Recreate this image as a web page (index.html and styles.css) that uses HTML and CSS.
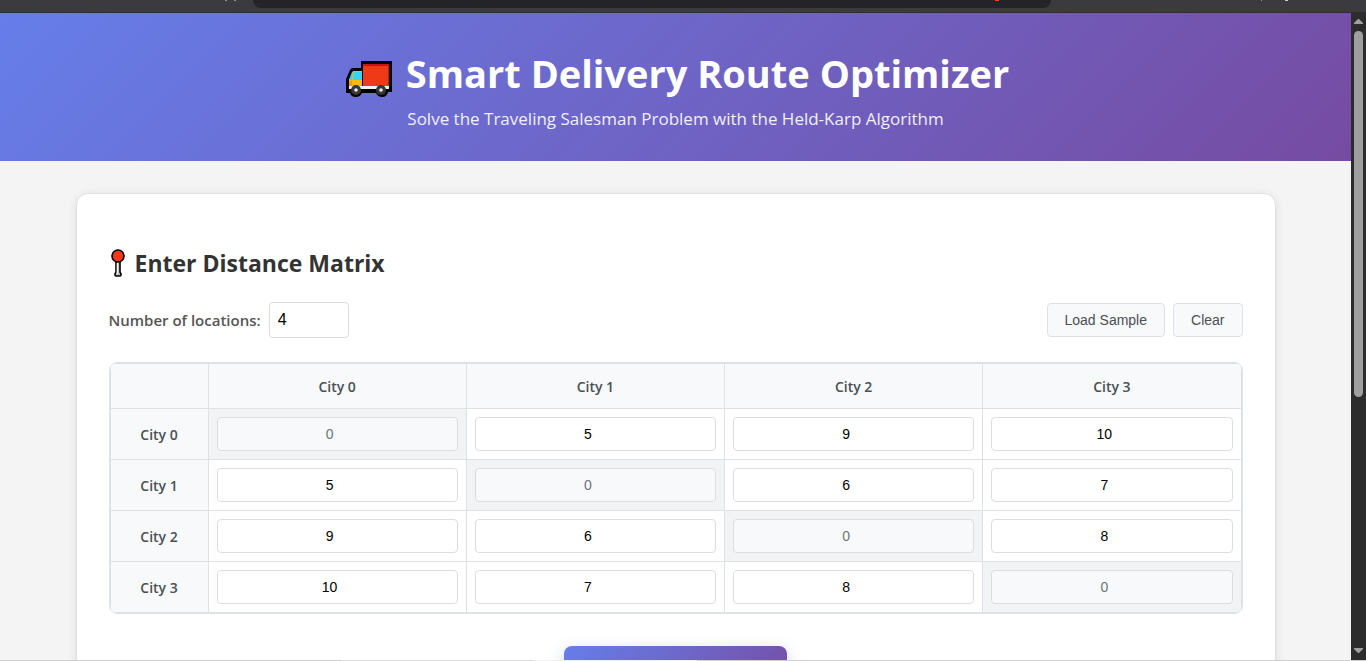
FILE: index.html
```html
<!DOCTYPE html>
<html lang="en">
<head>
<meta charset="utf-8">
<title>Smart Delivery Route Optimizer</title>
<link rel="stylesheet" href="styles.css">
</head>
<body>
<div class="toolbar">
  <svg class="marks" width="12" height="1" viewBox="0 0 12 1" aria-hidden="true"><path fill="#8c8c90" d="M1 0h2v1H1zM10 0h2v1h-2z"/></svg>
  <div class="address"><span class="shield"></span></div>
  <svg class="marks" width="28" height="1" viewBox="0 0 28 1" aria-hidden="true"><path fill="#8c8c90" d="M0 0h1v1H0z"/><path fill="#d0d0d2" d="M24 0h3v1h-3z"/></svg>
</div>
<div class="window">
  <div class="page">
    <header class="hero">
      <h1 class="hero-title">
        <svg class="truck" viewBox="0 0 46 36" aria-hidden="true">
          <path fill="#000" d="M15 0h31v31h-4q-1 5-6 5-4 0-6-4H16q-2 4-6 4-5 0-6-4H0V18L4 9q1-2 3-2h8z"/>
          <path fill="#f03a17" d="M17 3h26v22H17z"/>
          <path fill="#c81414" d="M17 3h26v2H17zM42 3h1v22h-1z"/>
          <path fill="#fdb813" d="M7 10h9v15H3v-6z"/>
          <path fill="#f59a00" d="M3 20h3v5H3z"/>
          <path fill="#32d4fa" d="M6 11h1l-1 8H3zM8 11h8v8H7z"/>
          <path fill="#f2f2f2" d="M3 25h40v3H3z"/>
          <circle cx="10" cy="29" r="5" fill="#383838"/><circle cx="35" cy="29" r="5" fill="#383838"/>
          <circle cx="10" cy="29" r="1.800" fill="#eee"/><circle cx="35" cy="29" r="1.800" fill="#eee"/>
        </svg>
        <span>Smart Delivery Route Optimizer</span>
      </h1>
      <p class="hero-sub">Solve the Traveling Salesman Problem with the Held-Karp Algorithm</p>
    </header>
    <main class="card">
      <h2 class="section-title">
        <svg class="pin" viewBox="0 0 14 28" aria-hidden="true">
          <path d="M5 12h4v11l1 2v1q0 1-1 1H5q-1 0-1-1v-1l1-2z" fill="#b8b8b8" stroke="#000" stroke-width="1.600"/>
          <path stroke="#f4f4f4" stroke-width="1.500" d="M6.500 14v11"/>
          <circle cx="7" cy="7" r="6" fill="#f03a17" stroke="#000" stroke-width="1.600"/>
        </svg>
        <span>Enter Distance Matrix</span>
      </h2>
      <div class="controls">
        <div class="field">
          <label for="count">Number of locations:</label>
          <input id="count" class="count" type="number" value="4">
        </div>
        <div class="actions">
          <button class="btn" type="button">Load Sample</button>
          <button class="btn" type="button">Clear</button>
        </div>
      </div>
      <div class="matrix-wrap">
        <table class="matrix">
          <thead>
            <tr><th class="corner"></th><th>City 0</th><th>City 1</th><th>City 2</th><th>City 3</th></tr>
          </thead>
          <tbody>
            <tr><th>City 0</th><td class="same"><input type="number" aria-label="City 0 to City 0" value="0" disabled></td><td><input type="number" aria-label="City 0 to City 1" value="5"></td><td><input type="number" aria-label="City 0 to City 2" value="9"></td><td><input type="number" aria-label="City 0 to City 3" value="10"></td></tr>
            <tr><th>City 1</th><td><input type="number" aria-label="City 1 to City 0" value="5"></td><td class="same"><input type="number" aria-label="City 1 to City 1" value="0" disabled></td><td><input type="number" aria-label="City 1 to City 2" value="6"></td><td><input type="number" aria-label="City 1 to City 3" value="7"></td></tr>
            <tr><th>City 2</th><td><input type="number" aria-label="City 2 to City 0" value="9"></td><td><input type="number" aria-label="City 2 to City 1" value="6"></td><td class="same"><input type="number" aria-label="City 2 to City 2" value="0" disabled></td><td><input type="number" aria-label="City 2 to City 3" value="8"></td></tr>
            <tr><th>City 3</th><td><input type="number" aria-label="City 3 to City 0" value="10"></td><td><input type="number" aria-label="City 3 to City 1" value="7"></td><td><input type="number" aria-label="City 3 to City 2" value="8"></td><td class="same"><input type="number" aria-label="City 3 to City 3" value="0" disabled></td></tr>
          </tbody>
        </table>
      </div>
      <button class="solve" type="button" aria-label="Optimize route"></button>
    </main>
  </div>
  <div class="scrollbar" aria-hidden="true">
    <svg width="9" height="5" viewBox="0 0 9 5"><path fill="#9f9f9f" d="M4 0h1l4 4v1H0V4z"/></svg>
    <div class="track"><div class="thumb"></div></div>
    <svg width="9" height="5" viewBox="0 0 9 5"><path fill="#9f9f9f" d="M0 0h9v1L5 5H4L0 1z"/></svg>
  </div>
</div>
<div class="edge"></div>
</body>
</html>
```
FILE: styles.css
```css
* { box-sizing: border-box; }

body {
  margin: 0;
  height: 100vh;
  display: flex;
  flex-direction: column;
  overflow: hidden;
  background: #f4f4f4;
  color: #333;
  font-family: "Segoe UI", "Open Sans", "Noto Sans", sans-serif;
}

.toolbar {
  flex: none;
  display: grid;
  grid-template-columns: 225px 28px minmax(0, 798px) 238px 1fr;
  height: 13px;
  background: #3b3a3f;
  border-bottom: 1px solid #2e2d31;
}
.toolbar .marks:first-child { grid-column: 1 / 3; justify-self: end; margin-right: 17px; }
.toolbar .marks:last-child { grid-column: 4; justify-self: end; }
.address {
  grid-column: 3;
  display: flex;
  justify-content: flex-end;
  height: 8px;
  padding-right: 52px;
  background: #242328;
  border-radius: 0 0 8px 8px;
}
.shield { width: 4px; height: 1px; background: #e0501b; }

.window { flex: 1; min-height: 0; display: flex; }
.page { flex: 1; min-width: 0; overflow: hidden; }

.hero {
  padding: 32px 16px 28px;
  color: #fff;
  text-align: center;
  background: linear-gradient(135deg, #667eea 0%, #764ba2 100%);
}
.hero-title {
  display: flex;
  justify-content: center;
  align-items: center;
  gap: 14px;
  margin: 0;
  font-size: 38px;
  line-height: 56px;
  font-weight: 700;
}
.truck { width: 46px; height: 36px; margin: 12px 0 0 4px; }
.hero-sub { margin: 4px 0 0; font-size: 17px; line-height: 28px; opacity: 0.9; }

.card {
  max-width: 1200px;
  margin: 32px auto;
  padding: 52px 32px 32px;
  background: #fff;
  border: 1px solid #dee2e6;
  border-radius: 12px;
  box-shadow: 0 2px 10px rgba(0, 0, 0, 0.1);
}
.section-title {
  display: flex;
  align-items: center;
  gap: 10px;
  margin: 0 0 22px;
  font-size: 23px;
  line-height: 34px;
  font-weight: 700;
}
.pin { width: 14px; height: 28px; margin-left: 2px; }

.controls {
  display: flex;
  justify-content: space-between;
  align-items: center;
  margin-bottom: 24px;
}
.field, .actions { display: flex; align-items: center; gap: 8px; }
.field label { font-size: 15px; font-weight: 600; color: #555; }
.count {
  width: 80px;
  height: 36px;
  padding: 8px;
  border: 1px solid #ddd;
  border-radius: 4px;
  font: 16px "Liberation Sans", Arial, sans-serif;
  color: #000;
}
.btn {
  height: 34px;
  padding: 0 17px;
  border: 1px solid #dee2e6;
  border-radius: 4px;
  background: #f8f9fa;
  color: #495057;
  font: 14px "Liberation Sans", Arial, sans-serif;
}

.matrix-wrap {
  border: 1px solid #dee2e6;
  border-radius: 8px;
  overflow: hidden;
}
.matrix { width: 100%; border-collapse: collapse; table-layout: fixed; }
.matrix th, .matrix td { border: 1px solid #dee2e6; padding: 8px; text-align: center; }
.matrix th { padding: 9px 8px 7px; background: #f8f9fa; color: #495057; font-size: 14px; line-height: 20px; font-weight: 600; }
.matrix thead th { height: 45px; }
.matrix .corner { width: 98px; }
.matrix .same { background: #f1f3f4; }
.matrix input {
  display: block;
  width: 100%;
  height: 34px;
  padding: 8px;
  border: 1px solid #ddd;
  border-radius: 4px;
  background: #fff;
  color: #000;
  text-align: center;
  font: 14px "Liberation Sans", Arial, sans-serif;
}
.matrix input:disabled { background: #f8f9fa; color: #6c757d; }

.solve {
  display: block;
  width: 223px;
  height: 50px;
  margin: 32px auto 0;
  border: 0;
  border-radius: 8px;
  background: linear-gradient(135deg, #667eea 0%, #764ba2 100%);
  box-shadow: 0 4px 15px rgba(102, 126, 234, 0.3);
}

.scrollbar {
  flex: none;
  width: 15px;
  display: flex;
  flex-direction: column;
  align-items: center;
  padding: 6px 0 7px;
  background: #2c2c2c;
}
.track { flex: 1; width: 9px; padding: 7px 0; }
.thumb { height: 60%; border-radius: 5px; background: #9f9f9f; }
.edge {
  flex: none;
  height: 1px;
  background: linear-gradient(90deg, #cfcfcf 25%, #dcdcdc 25% 39%, #f0f0f0 39% 51%, #d0d0d0 51%);
}
```
